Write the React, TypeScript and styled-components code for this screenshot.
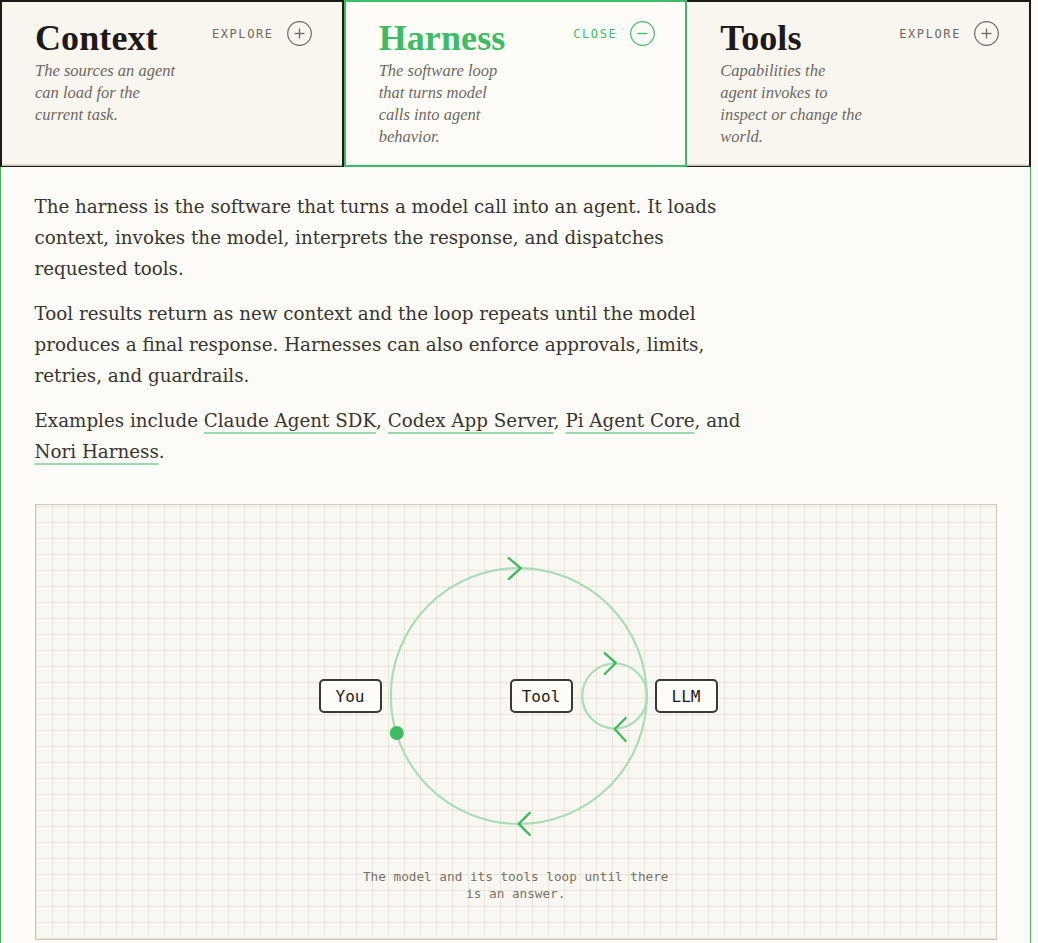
import React from "react";
import styled, { createGlobalStyle } from "styled-components";

const GREEN = "#3dbc63";
const INK = "#1d1a17";
const TEXT = "#3b3733";
const MUTED = "#6d6862";
const SERIF = `"Liberation Serif", "Times New Roman", serif`;
const BOOK = `"DejaVu Serif", "Liberation Serif", serif`;
const MONO = `"DejaVu Sans Mono", "Liberation Mono", monospace`;

const Global = createGlobalStyle`
  html, body { margin: 0; padding: 0; background: #fcfbf6; }
  body { font-family: ${BOOK}; color: ${TEXT}; }
  * { box-sizing: border-box; }
`;

const Page = styled.div`
  width: 1031px;
`;

const Tabs = styled.div`
  display: grid;
  grid-template-columns: repeat(3, 1fr);
  height: 167px;
`;

const Card = styled.div<{ $active?: boolean; $afterActive?: boolean }>`
  display: flex;
  justify-content: space-between;
  align-items: flex-start;
  padding: 18px 30px 0 33px;
  background: ${(p) => (p.$active ? "#fdfcf7" : "#f9f6f0")};
  border: 2px solid ${(p) => (p.$active ? GREEN : INK)};
  border-left: ${(p) => (p.$afterActive ? "none" : undefined)};
  border-bottom-width: ${(p) => (p.$active ? "2px" : "1.5px")};
  box-shadow: ${(p) => (p.$active ? "none" : "inset 0 -1.5px 0 #c9c2b6")};
`;

const CardText = styled.div`
  display: flex;
  flex-direction: column;
`;

const Title = styled.h2<{ $active?: boolean }>`
  margin: 0;
  font-family: ${SERIF};
  font-weight: 700;
  font-size: 36px;
  line-height: 36px;
  letter-spacing: 0.1px;
  color: ${(p) => (p.$active ? GREEN : INK)};
`;

const Blurb = styled.p`
  margin: 4px 0 0;
  white-space: pre-line;
  font-family: ${SERIF};
  font-style: italic;
  font-size: 16.5px;
  line-height: 22px;
  color: ${MUTED};
`;

const Action = styled.button<{ $active?: boolean }>`
  display: flex;
  align-items: center;
  gap: 13px;
  margin-top: 1px;
  padding: 0;
  border: 0;
  background: none;
  cursor: pointer;
  font-family: ${MONO};
  font-size: 12px;
  letter-spacing: 1.6px;
  color: ${(p) => (p.$active ? GREEN : MUTED)};
`;

const Panel = styled.section`
  background: #fdfcf8;
  border-left: 1.5px solid ${GREEN};
  border-right: 1.5px solid ${GREEN};
  padding: 24px 33px 3px 33.5px;
`;

const Prose = styled.div`
  max-width: 722px;
  font-family: ${BOOK};
  font-size: 18.3px;
  line-height: 31px;
  color: #38342f;

  p { margin: 0 0 14px; }
  p:last-child { margin-bottom: 0; }
`;

const Link = styled.a`
  color: inherit;
  text-decoration: underline;
  text-decoration-color: #9dd8ae;
  text-decoration-thickness: 2px;
  text-underline-offset: 5px;
`;

const Diagram = styled.figure`
  margin: 37px 0 0;
  height: 436px;
  border: 1px solid #cfc8bc;
  background-color: #f9f7f1;
  background-image:
    linear-gradient(to right, #eae5da 1px, transparent 1px),
    linear-gradient(to bottom, #eae5da 1px, transparent 1px);
  background-size: 16px 16px;
  background-position: 0 1px;
`;

const Canvas = styled.div`
  position: relative;
  height: 363px;
`;

const Loop = styled.svg`
  position: absolute;
  inset: 0;
  width: 100%;
  height: 100%;
`;

const Node = styled.div<{ $x: number }>`
  position: absolute;
  top: 174px;
  left: ${(p) => p.$x}px;
  width: 63px;
  height: 34px;
  display: flex;
  align-items: center;
  justify-content: center;
  border: 2px solid #3b3733;
  border-radius: 5px;
  background: #fdfcf8;
  font-family: ${MONO};
  font-size: 16px;
  color: ${INK};
`;

const Caption = styled.figcaption`
  max-width: 312px;
  margin: 0 auto;
  text-align: center;
  font-family: ${MONO};
  font-size: 12.7px;
  line-height: 17px;
  color: #77716a;
`;

function RoundIcon({ minus, color }: { minus?: boolean; color: string }) {
  return (
    <svg width="25" height="25" viewBox="0 0 25 25" fill="none">
      <circle cx="12.5" cy="12.5" r="11.8" stroke={color} strokeWidth="1.2" />
      <line x1="7.5" y1="12.5" x2="17.5" y2="12.5" stroke={color} strokeWidth="1.3" />
      {!minus && <line x1="12.5" y1="7.5" x2="12.5" y2="17.5" stroke={color} strokeWidth="1.3" />}
    </svg>
  );
}

const cards = [
  { title: "Context", blurb: "The sources an agent\ncan load for the\ncurrent task." },
  { title: "Harness", blurb: "The software loop\nthat turns model\ncalls into agent\nbehavior.", active: true },
  { title: "Tools", blurb: "Capabilities the\nagent invokes to\ninspect or change the\nworld." },
];

function Chevron({ d }: { d: string }) {
  return <path d={d} stroke={GREEN} strokeWidth="2.4" strokeLinecap="round" strokeLinejoin="round" fill="none" />;
}

export default function App() {
  return (
    <Page>
      <Global />
      <Tabs>
        {cards.map((c, i) => (
          <Card key={c.title} $active={c.active} $afterActive={i > 0 && !!cards[i - 1].active}>
            <CardText>
              <Title $active={c.active}>{c.title}</Title>
              <Blurb>{c.blurb}</Blurb>
            </CardText>
            <Action $active={c.active}>
              {c.active ? "CLOSE" : "EXPLORE"}
              <RoundIcon minus={c.active} color={c.active ? GREEN : MUTED} />
            </Action>
          </Card>
        ))}
      </Tabs>
      <Panel>
        <Prose>
          <p>
            The harness is the software that turns a model call into an agent. It loads context,
            invokes the model, interprets the response, and dispatches requested tools.
          </p>
          <p>
            Tool results return as new context and the loop repeats until the model produces a
            final response. Harnesses can also enforce approvals, limits, retries, and guardrails.
          </p>
          <p>
            Examples include <Link href="#">Claude Agent SDK</Link>, <Link href="#">Codex App Server</Link>,{" "}
            <Link href="#">Pi Agent Core</Link>, and <Link href="#">Nori Harness</Link>.
          </p>
        </Prose>
        <Diagram>
          <Canvas>
            <Loop viewBox="0 0 961 363">
              <circle cx="483" cy="191" r="128" stroke="#a9dcb7" strokeWidth="2.2" fill="none" />
              <circle cx="579" cy="191" r="32.5" stroke="#a9dcb7" strokeWidth="2.2" fill="none" />
              <Chevron d="M473 53 L485 63 L473 74" />
              <Chevron d="M494 308 L483 319 L494 330" />
              <Chevron d="M569 148 L580 158 L569 169" />
              <Chevron d="M590 213 L579 224 L590 236" />
              <circle cx="361" cy="228" r="7" fill={GREEN} />
            </Loop>
            <Node $x={283}>You</Node>
            <Node $x={474}>Tool</Node>
            <Node $x={619}>LLM</Node>
          </Canvas>
          <Caption>The model and its tools loop until there is an answer.</Caption>
        </Diagram>
      </Panel>
    </Page>
  );
}
